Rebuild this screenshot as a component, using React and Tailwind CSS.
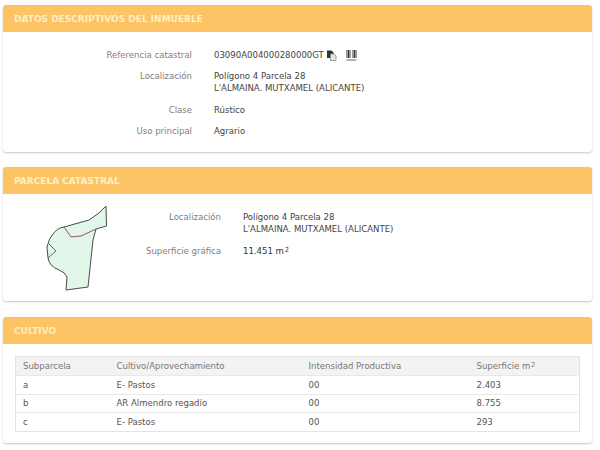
const font = { fontFamily: '"DejaVu Sans Condensed", "DejaVu Sans", Verdana, sans-serif', fontStretch: "condensed" };

function Panel({ title, children, className }) {
  return (
    <section className={`rounded-[3px] bg-white shadow-[0_1px_2px_rgba(0,0,0,0.22)] ${className}`}>
      <h2 className="flex h-[27px] items-center rounded-t-[3px] bg-[#fcc464] pl-[11px] text-[9px] font-bold text-[#fdeec4]" style={{ fontFamily: '"DejaVu Sans", sans-serif', fontStretch: "normal" }}>
        {title}
      </h2>
      {children}
    </section>
  );
}

function Row({ label, children, labelW, className = "" }) {
  return (
    <div className={`flex ${className}`}>
      <div className={`${labelW} shrink-0 text-right text-[#808080]`}>{label}</div>
      <div className="ml-[22px] text-[#444444]">{children}</div>
    </div>
  );
}

function CopyIcon() {
  return (
    <svg width="11" height="11" viewBox="0 0 11 11" className="ml-[2px]">
      <path d="M1 0.5H5.5L7.5 2.5V8H1Z" fill="#333" />
      <path d="M4.5 4H8L10 6V10.5H4.5Z" fill="#e4e4e4" stroke="#8a8a8a" strokeWidth="0.8" />
    </svg>
  );
}

function BarcodeIcon() {
  return (
    <svg width="11" height="11" viewBox="0 0 11 11" className="ml-[9px]">
      <path d="M1 0V8M2.500 0V8M4 0V8M7 0V8M8.500 0V8M10 0V8" stroke="#333" strokeWidth="1" />
      <path d="M0.500 10H10.500" stroke="#666" strokeWidth="1" />
    </svg>
  );
}

function Plot() {
  return (
    <svg width="70" height="92" viewBox="46 204 70 92" className="shrink-0">
      <path d="M107 206L107.500 226L97 229L94 240L89 287L67 290L68 277Q66 272 60 270Q50 266 49 258L48 247Q50 238 54 234Q58 228 65 227L90 220L100 213Z" fill="#e2f6ea" stroke="#4a4a4a" strokeWidth="1" strokeLinejoin="round" />
      <path d="M65 227L72 237L82 236L97 229" fill="none" stroke="#8a4a4a" strokeWidth="0.9" />
      <path d="M50 244L57 251L49 258" fill="none" stroke="#8a4a4a" strokeWidth="0.9" />
    </svg>
  );
}

const rows = [
  ["a", "E- Pastos", "00", "2.403"],
  ["b", "AR Almendro regadío", "00", "8.755"],
  ["c", "E- Pastos", "00", "293"],
];

const Sup = () => <sup className="relative top-[-2px] ml-[1px] align-baseline text-[7px] leading-none">2</sup>;

export default function App() {
  return (
    <div className="flex h-[450px] w-[600px] flex-col overflow-hidden bg-white pl-[3px] pr-[8px] pt-[5px] text-[9.5px] leading-[12px]" style={font}>
      <Panel title="DATOS DESCRIPTIVOS DEL INMUEBLE" className="h-[147px]">
        <div className="flex flex-col pt-[17px]">
          <Row label="Referencia catastral" labelW="w-[189px]">
            <span className="flex items-center">03090A004000280000GT<CopyIcon /><BarcodeIcon /></span>
          </Row>
          <Row label="Localización" labelW="w-[189px]" className="mt-[9px]">
            Polígono 4 Parcela 28<br />L'ALMAINA. MUTXAMEL (ALICANTE)
          </Row>
          <Row label="Clase" labelW="w-[189px]" className="mt-[10px]">Rústico</Row>
          <Row label="Uso principal" labelW="w-[189px]" className="mt-[9px]">Agrario</Row>
        </div>
      </Panel>

      <Panel title="PARCELA CATASTRAL" className="mt-[15px] h-[134px]">
        <div className="relative pt-[17px]">
          <div className="absolute left-[42px] top-[10px]"><Plot /></div>
          <Row label="Localización" labelW="w-[218px]">
            Polígono 4 Parcela 28<br />L'ALMAINA. MUTXAMEL (ALICANTE)
          </Row>
          <Row label="Superficie gráfica" labelW="w-[218px]" className="mt-[10px] items-baseline">
            <span className="text-[#333]">11.451 m<Sup /></span>
          </Row>
        </div>
      </Panel>

      <Panel title="CULTIVO" className="mt-[16px] h-[126px]">
        <div className="px-[12px] pt-[12px]">
          <table className="w-[565px] table-fixed border-collapse border border-[#e4e4e4] text-left text-[#555]">
            <colgroup>
              <col className="w-[93px]" />
              <col className="w-[192px]" />
              <col className="w-[168px]" />
              <col />
            </colgroup>
            <thead>
              <tr className="h-[19px] bg-[#f3f3f3] text-[#777]">
                <th className="pl-[7px] font-normal">Subparcela</th>
                <th className="pl-[8px] font-normal">Cultivo/Aprovechamiento</th>
                <th className="pl-[8px] font-normal">Intensidad Productiva</th>
                <th className="pl-[8px] font-normal">Superficie m<Sup /></th>
              </tr>
            </thead>
            <tbody>
              {rows.map((r) => (
                <tr key={r[0]} className="h-[18.500px] border-t border-[#e8e8e8]">
                  <td className="pl-[7px]">{r[0]}</td>
                  <td className="pl-[8px]">{r[1]}</td>
                  <td className="pl-[8px]">{r[2]}</td>
                  <td className="pl-[8px]">{r[3]}</td>
                </tr>
              ))}
            </tbody>
          </table>
        </div>
      </Panel>
    </div>
  );
}
